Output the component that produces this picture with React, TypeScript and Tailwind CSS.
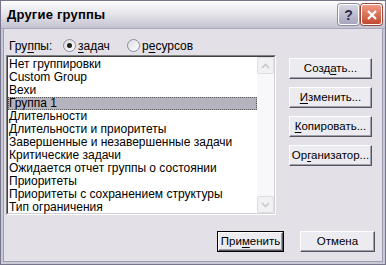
import React from "react";

const items = [
  "Нет группировки",
  "Custom Group",
  "Вехи",
  "Группа 1",
  "Длительности",
  "Длительности и приоритеты",
  "Завершенные и незавершенные задачи",
  "Критические задачи",
  "Ожидается отчет группы о состоянии",
  "Приоритеты",
  "Приоритеты с сохранением структуры",
  "Тип ограничения",
];

const font = "font-['Tahoma','Liberation_Sans',sans-serif]";

function Btn({
  pre,
  u,
  post,
  w,
  isDefault,
}: {
  pre: string;
  u?: string;
  post?: string;
  w: string;
  isDefault?: boolean;
}) {
  return (
    <div
      className={`${w} h-[21px] ${
        isDefault ? "border border-black" : ""
      } flex`}
    >
      <div className="flex-1 flex items-center justify-center bg-[#ecebf0] border-t border-l border-t-white border-l-white border-b border-r border-b-[#55545f] border-r-[#55545f] shadow-[inset_-1px_-1px_0_#a09fab] text-[11.5px] text-black leading-none">
        <span>
          {pre}
          {u && <span className="underline underline-offset-2">{u}</span>}
          {post}
        </span>
      </div>
    </div>
  );
}

function Radio({ checked }: { checked?: boolean }) {
  return (
    <span className="w-[13px] h-[13px] shrink-0 rounded-full border border-[#8d8c9c] bg-gradient-to-br from-[#dcdbe2] to-white flex items-center justify-center">
      {checked && <span className="w-[5px] h-[5px] rounded-full bg-[#202020]" />}
    </span>
  );
}

function ScrollArrow({ up }: { up?: boolean }) {
  return (
    <div className="w-[17px] h-[17px] rounded-[2px] border border-[#dedde2] bg-[#f1f0f3] flex items-center justify-center">
      <svg width="9" height="6" viewBox="0 0 9 6">
        <path
          d={up ? "M1 5 L4.5 1.5 L8 5" : "M1 1 L4.5 4.5 L8 1"}
          fill="none"
          stroke="#c8c7d0"
          strokeWidth="1.6"
        />
      </svg>
    </div>
  );
}

export default function App() {
  return (
    <div
      className={`w-[386px] h-[265px] flex flex-col bg-[#c9c8d6] border border-[#76758c] ${font} text-black`}
    >
      {/* title bar */}
      <div className="h-[28px] flex items-center justify-between pl-[6px] pr-[3px] bg-gradient-to-b from-[#fdfdfe] via-[#e4e3ea] to-[#c3c2d0] border-b border-[#a9a8ba]">
        <span className="text-[13px] font-bold tracking-[0.2px]">Другие группы</span>
        <div className="flex gap-[2px]">
          <div className="w-[21px] h-[21px] rounded-[3px] border border-white bg-gradient-to-b from-[#d8d7e3] to-[#a5a4bc] shadow-[0_0_0_1px_#8e8da5] flex items-center justify-center text-[#2b2b48] text-[14px] font-bold leading-none">
            ?
          </div>
          <div className="w-[21px] h-[21px] rounded-[3px] border border-white bg-gradient-to-b from-[#f09a84] to-[#c2482f] shadow-[0_0_0_1px_#9a4a3c] flex items-center justify-center">
            <svg width="12" height="12" viewBox="0 0 12 12">
              <path d="M2 2 L10 10 M10 2 L2 10" stroke="white" strokeWidth="2.2" />
            </svg>
          </div>
        </div>
      </div>

      {/* body */}
      <div className="flex-1 mx-[2px] mb-[2px] bg-[#e4e0e8] border-x border-b border-[#9e9db0] flex flex-col text-[12px]">
        <div className="flex items-center h-[13px] mt-[10px] pl-[5px]">
          <span className="w-[54px]">
            Гру<span className="underline underline-offset-2">п</span>пы:
          </span>
          <Radio checked />
          <span className="w-[51px] pl-[2px]">
            <span className="underline underline-offset-2">з</span>адач
          </span>
          <Radio />
          <span className="pl-[2px]">
            р<span className="underline underline-offset-2">е</span>сурсов
          </span>
        </div>

        <div className="flex mt-[3px] ml-[2px]">
          {/* list */}
          <div className="w-[270px] h-[160px] border border-t-[#808080] border-l-[#808080] border-b-white border-r-white">
            <div className="w-full h-full border border-t-[#404040] border-l-[#404040] border-b-[#d4d0d8] border-r-[#d4d0d8] bg-white flex">
              <div className="flex-1 flex flex-col pt-px">
                {items.map((t) => (
                  <div
                    key={t}
                    className={`h-[13px] leading-[13px] pl-px whitespace-nowrap ${
                      t === "Группа 1"
                        ? "bg-[#b4b3be] outline-1 outline-dotted outline-[#555] -outline-offset-1"
                        : ""
                    }`}
                  >
                    {t}
                  </div>
                ))}
              </div>
              <div className="w-[17px] bg-[#f8f8fa] flex flex-col justify-between">
                <ScrollArrow up />
                <ScrollArrow />
              </div>
            </div>
          </div>

          {/* side buttons */}
          <div className="flex flex-col gap-[8px] ml-[13px] mt-[3px]">
            <Btn w="w-[83px]" pre="Созд" u="а" post="ть..." />
            <Btn w="w-[83px]" pre="" u="И" post="зменить..." />
            <Btn w="w-[83px]" pre="" u="К" post="опировать..." />
            <Btn w="w-[83px]" pre="Ор" u="г" post="анизатор..." />
          </div>
        </div>

        <div className="flex mt-[16px] ml-[213px]">
          <Btn w="w-[67px]" pre="При" u="м" post="енить" isDefault />
          <div className="ml-[16px]">
            <Btn w="w-[75px]" pre="Отмена" />
          </div>
        </div>
      </div>
    </div>
  );
}
